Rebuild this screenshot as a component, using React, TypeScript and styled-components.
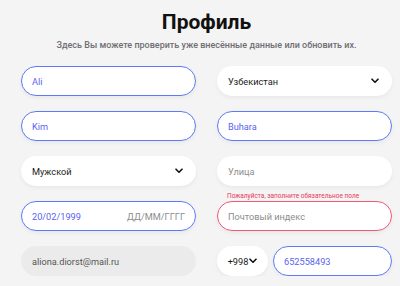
import React from "react";
import styled, { createGlobalStyle } from "styled-components";

const GlobalStyle = createGlobalStyle`
    html, body {
        margin: 0;
        padding: 0;
        background: #f4f4f4;
        font-family: Roboto, "Noto Sans", sans-serif;
    }
`;

const Chevron = () => (
    <svg width="8" height="6" viewBox="0 0 8 6" fill="none">
        <path d="M1 1.2l3 3 3-3" stroke="#111" strokeWidth="1.6" strokeLinecap="round" strokeLinejoin="round" />
    </svg>
);

const App = () => {
    return (
        <Page>
            <GlobalStyle />
            <Title>Профиль</Title>
            <Subtitle>Здесь Вы можете проверить уже внесённые данные или обновить их.</Subtitle>
            <Form>
                <Field $state="active"><Value $blue>Ali</Value></Field>
                <Field $select><Value>Узбекистан</Value><Chevron /></Field>

                <Field $state="active"><Value $blue>Kim</Value></Field>
                <Field $state="active"><Value $blue>Buhara</Value></Field>

                <Field $select><Value>Мужской</Value><Chevron /></Field>
                <Field><Placeholder>Улица</Placeholder></Field>

                <Field $state="active">
                    <Value $blue>20/02/1999</Value>
                    <Placeholder>ДД/ММ/ГГГГ</Placeholder>
                </Field>
                <Cell>
                    <ErrorText>Пожалуйста, заполните обязательное поле</ErrorText>
                    <Field $state="error"><Placeholder>Почтовый индекс</Placeholder></Field>
                </Cell>

                <Field $state="disabled"><Value $muted>aliona.diorst@mail.ru</Value></Field>
                <PhoneRow>
                    <CodeSelect>+998<Chevron /></CodeSelect>
                    <Field $state="active"><Value $blue>652558493</Value></Field>
                </PhoneRow>
            </Form>
        </Page>
    );
};

export default App;

const Page = styled.div`
    padding: 8px 8px 0 21px;
`;

const Title = styled.h1`
    margin: 0;
    text-align: center;
    font-size: 21px;
    line-height: 28px;
    font-weight: 700;
    color: #111;
`;

const Subtitle = styled.p`
    margin: 3px 0 0;
    text-align: center;
    font-size: 9px;
    line-height: 13px;
    font-weight: 500;
    color: #6e6e73;
`;

const Form = styled.div`
    margin-top: 14px;
    display: grid;
    grid-template-columns: 1fr 1fr;
    column-gap: 21px;
    row-gap: 15px;
`;

const Cell = styled.div`
    position: relative;
`;

const Field = styled.div<{ $state?: "active" | "error" | "disabled"; $select?: boolean }>`
    box-sizing: border-box;
    height: 30px;
    padding: 0 ${p => (p.$select ? "12px" : "10px")} 0 10px;
    border-radius: 15px;
    display: flex;
    align-items: center;
    justify-content: space-between;
    flex: 1;
    background: ${p => (p.$state === "disabled" ? "#ebebeb" : "#fff")};
    border: 1.5px solid
        ${p =>
            p.$state === "active" ? "#5d7bf6" : p.$state === "error" ? "#ef5876" : "transparent"};
    box-shadow: ${p => (p.$state === "disabled" ? "none" : "0 2px 4px rgba(0, 0, 0, 0.05)")};
`;

const Value = styled.span<{ $blue?: boolean; $muted?: boolean }>`
    font-size: 9.2px;
    color: ${p => (p.$blue ? "#5a5ff2" : p.$muted ? "#555" : "#1a1a1a")};
`;

const Placeholder = styled.span`
    font-size: 9.2px;
    color: #8d8d8d;
`;

const ErrorText = styled.span`
    position: absolute;
    left: 10px;
    top: -9px;
    font-size: 6.5px;
    line-height: 8px;
    color: #e8345a;
    white-space: nowrap;
`;

const PhoneRow = styled.div`
    display: flex;
    gap: 5px;
`;

const CodeSelect = styled.div`
    box-sizing: border-box;
    width: 51px;
    height: 30px;
    border-radius: 15px;
    background: #fff;
    box-shadow: 0 2px 4px rgba(0, 0, 0, 0.05);
    display: flex;
    align-items: center;
    justify-content: center;
    gap: 1px;
    font-size: 9.2px;
    color: #1a1a1a;
`;
